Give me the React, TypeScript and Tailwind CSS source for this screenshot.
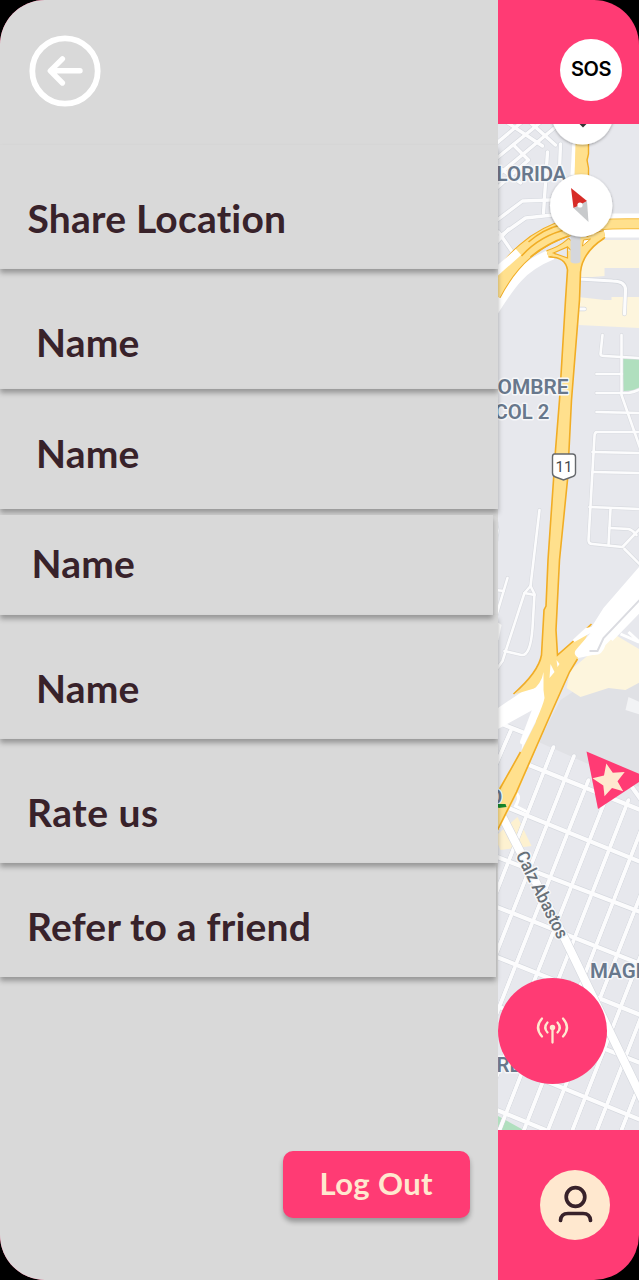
import React from "react";

type Row = { label: string; box: string; text: string };

const rows: Row[] = [
  { label: "Share Location", box: "h-[124px] w-full pt-[49px] pl-[27.5px]", text: "tracking-[0.2px]" },
  { label: "Name", box: "h-[120px] w-full pt-[49px] pl-[36px]", text: "tracking-[0.2px]" },
  { label: "Name", box: "h-[120px] w-full pt-[40px] pl-[36px]", text: "tracking-[0.2px]" },
  { label: "Name", box: "mt-[5.5px] h-[100px] w-[493px] bg-[#d9d9d9] pt-[24.5px] pl-[31.5px]", text: "tracking-[0.2px]" },
  { label: "Name", box: "h-[124.5px] w-full pt-[49.5px] pl-[36px]", text: "tracking-[0.2px]" },
  { label: "Rate us", box: "h-[124px] w-full pt-[49px] pl-[27px]", text: "tracking-[0.5px]" },
  { label: "Refer to a friend", box: "h-[114px] w-[496px] pt-[39px] pl-[27px]", text: "tracking-[0.2px]" },
];

const across = [
  "M526 764L645 812", "M503 806L645 864", "M494 856L645 914", "M494 906L645 966",
  "M494 956L645 1017", "M494 1005L645 1065", "M494 1060L645 1122", "M494 1109L545 1130",
  "M494 721L524 733", "M630 785L650 813",
];
const down = [
  "M511 729L494 768", "M532 740L474 887", "M553 747L494 897", "M573.5 756L494 958", "M588 780L470 1080",
  "M608 792L475 1130", "M628 800L499 1130", "M650 806L523.5 1130",
  "M654 860L547.5 1130", "M655 918L572 1130", "M655 980L596.5 1130", "M655 1043L621 1130", "M655 1104L645 1130",
];
const suburb = [
  "M602 335L600 354Q600 356 604 356L639 358", "M621 335L621 395L642 455", "M596 374L621 374",
  "M596 393L628 393Q634 392 640 389", "M596 412L640 413", "M642 432L596 432Q594 433 594 436L588 540Q588 544 592 544L622 547L640 528",
  "M592 452L640 453", "M592 472L640 473", "M589 507L640 509", "M610 509L608 545",
  "M609 528L628 529Q632 530 636 535", "M624 549L642 567",
  "M539 510L530 586L524 593L502 661L494 672", "M530 586L534 594L532 628Q530 656 521 655L504 651", "M524 593L534 595",
  "M507 578L496 615", "M495 590L503 591",
];

function Roads({ list, width, edge = "#d5d8de" }: { list: string[]; width: number; edge?: string }) {
  return (
    <g fill="none" strokeLinecap="round" strokeLinejoin="round">
      {list.map((d) => <path key={`e${d}`} d={d} stroke={edge} strokeWidth={width + 1.2} />)}
      {list.map((d) => <path key={d} d={d} stroke="#fcfcfd" strokeWidth={width} />)}
    </g>
  );
}

function CityMap() {
  return (
    <svg className="block h-[1005.5px] w-full shrink-0" viewBox="497.5 124 141.5 1005.5" preserveAspectRatio="none">
      <defs>
        <filter id="lift" x="-20%" y="-20%" width="140%" height="140%">
          <feDropShadow dx="0" dy="1" stdDeviation="1.5" floodOpacity="0.35" />
        </filter>
      </defs>
      <rect x="490" y="120" width="160" height="1015" fill="#e7e8ed" />
      <path d="M560 700L590 680L645 660V790L590 765L538 742Z" fill="#e0e1e5" />
      <path d="M596 240H640V328L578 325V297L604 298V268H580L584 245Z" fill="#fdf5dd" />
      <path d="M580 268H640V297H611V300H604L578 297Z" fill="#e4e5ea" />
      <path d="M584 245H604V276L580 278Z" fill="#fdf5dd" />
      <path d="M622 358H640V390L623 391Z" fill="#b0dfbe" />
      <path d="M570 670L600 645L615 635L640 650V682L625 690L608 688L580 697L566 688Z" fill="#fdf5dd" />
      <path d="M628 697L641 703V715L625 710Z" fill="#f2f3f5" />
      <path d="M494 837L517 817L531 846L500 850Z" fill="#fdf1d0" />
      <path d="M494 1114L523 1130H494Z" fill="#b0dfbe" />

      <Roads
        list={["M494 145L513 129L530 115", "M494 160L532 129L545 118", "M494 178L549 132L561 122", "M500 118L542 146", "M518 112L555 145", "M494 164L520 183", "M513 145L528 160L494 190", "M547 152L543 213", "M560 144L559 170", "M494 222L522 201L550 200", "M494 240L525 218L552 215", "M498 232L516 258", "M494 245L508 229"]}
        width={3.4}
      />
      <path d="M574 140L572 175" stroke="#fff" strokeWidth="4" />
      <Roads list={suburb} width={2.6} edge="#d9dbe0" />
      <Roads list={["M578 279L612 281Q625 281 625 290L624 314", "M577 309H584"]} width={3.2} />
      <Roads list={down} width={3.5} />
      <Roads list={across} width={4.2} />
      <g stroke="#fcfcfd" strokeWidth="3.4">
        {down.map((d) => <path key={d} d={d} />)}
      </g>

      <g fill="none" strokeLinecap="round">
        <path d="M501 815L565 940L650 1116" stroke="#d5d8de" strokeWidth="9.4" />
        <path d="M501 815L565 940L650 1116" stroke="#fff" strokeWidth="8.2" />
        <path d="M514 792Q520 795 517 802L515 806L525 811" stroke="#fff" strokeWidth="3" />
        <path d="M490 722L545 685" stroke="#fff" strokeWidth="15" />
        <path d="M542 689L522 742" stroke="#fff" strokeWidth="5" />
      </g>
      <path d="M494 515Q503 528 494 552Z" fill="#fff" stroke="#d8dbe0" />
      <path d="M494 620L501 625L498 640H494Z" fill="#fff" />

      <g fill="none">
        <path d="M603 225.500H642" stroke="#fff" strokeWidth="24" />
        <path d="M596 225Q620 223 642 224" stroke="#f6bd3f" strokeWidth="11" />
        <path d="M596 225Q620 223 642 224" stroke="#ffe08d" strokeWidth="9" />
        <path d="M490 315C510 283 520 267 552 254" stroke="#fff" strokeWidth="11" />
        <path d="M492 294C510 259 535 237 572 226" stroke="#f1ad25" strokeWidth="18" />
        <path d="M492 294C510 259 535 237 572 226" stroke="#ffe08d" strokeWidth="16" />
        <path d="M492 275L518 252" stroke="#fff" strokeWidth="8" />
        <path d="M521 256Q540 235 568 229M530 257Q545 244 568 236M528 242Q543 229 560 225" stroke="#f1ad25" strokeWidth="1.6" />
        <path d="M547 254Q560 250 568 243L580 255L586 241Q594 236 604 234" stroke="#f1ad25" strokeWidth="8" />
        <path d="M547 254Q560 250 568 243L580 255L586 241Q594 236 604 234" stroke="#ffe08d" strokeWidth="6" />
      </g>
      <path d="M575 141H588V157L587 165L588 180H574Z" fill="#ffe08d" />
      <path d="M588 141V154L586.5 160L588 168V180" fill="none" stroke="#f1ad25" strokeWidth="1.4" />
      <path d="M549 256Q565 257 567 270L565 300L559 400L555 450L553 480L547.5 560L545.5 606L543.5 610L541 655Q540 670 515 694L542 686L535 723L520 753L497 790V832L516 795L552 710L569 672L577 659L591 624L557 655L555.5 630L559 560L567 480L571 400L579 300L580 272Q582 252 604 237H572V250Z" fill="#ffe08d" />
      <path d="M549 257Q565 257 567 270L565 300L559 400L555 450L553 480L547.5 560L545.5 606L543.5 610L541 655Q538 672 513 694M520 752L497 793M497 830L516 792L552 710L569 672L577 659M591 624L573 641L557 655L555.5 630L559 560L567 480L571 400L579 300L580 272Q582 252 604 238" fill="none" stroke="#f1ad25" strokeWidth="1.6" />
      <path d="M553 253L567 247V258Z" fill="#e7e8ed" stroke="#f1ad25" strokeWidth="1.2" />
      <path d="M583 240L590 239L582 246Z" fill="#fff" stroke="#f1ad25" />
      <path d="M570 228H580V262Q575 265 570 262Z" fill="#d5d7dc" />
      <path d="M494 710L531 691Q541 684 543 672V690L544 698Q543 704 535 722L521 750L523 735L532 710L494 731Z" fill="#fff" />
      <path d="M550 664L554 672L549 678ZM556 660L559 664L557 667Z" fill="#fff" />
      <path d="M572 640L585 628L591 627L603 608L641 564V608L622 628L605 645Q602 656 592 655L578 658Q571 654 577 648L590 633L574 642Z" fill="#fff" />
      <path d="M589 651L597 651L603 638L641 598" fill="none" stroke="#dbdce1" strokeWidth="2" />
      <path d="M611 640L640 610M620 634L638 642M628 632L642 645" stroke="#fff" strokeWidth="3" />

      <g fontFamily="Roboto, sans-serif" fill="#68788c" stroke="#f6f7f9" strokeWidth="3" paintOrder="stroke" strokeLinejoin="round">
        <text x="496" y="181" fontSize="20.5" fontWeight="600" textLength="70" lengthAdjust="spacingAndGlyphs">LORIDA</text>
        <text x="497" y="394" fontSize="20.5" fontWeight="600" textLength="71" lengthAdjust="spacingAndGlyphs">OMBRE</text>
        <text x="494" y="419" fontSize="20.5" fontWeight="600" textLength="55" lengthAdjust="spacingAndGlyphs">COL 2</text>
        <text x="589.5" y="978" fontSize="20.5" fontWeight="600">MAGI</text>
        <text x="496" y="1072" fontSize="20.5" fontWeight="600">RE</text>
        <text x="488" y="804" fontSize="20" fontWeight="600">O</text>
        <text transform="translate(515 855) rotate(63.500)" fontSize="18" fontWeight="500" fill="#687078" textLength="95" lengthAdjust="spacingAndGlyphs">Calz Abastos</text>
      </g>
      <path d="M496 804L505 804L506 807L498 808Z" fill="#16862c" />

      <path d="M554 454H572Q575 454 575 457V473Q575 476 571 477L563 480L555 477Q552 476 552 473V457Q552 454 554 454Z" fill="#fff" stroke="#65686c" strokeWidth="1.4" />
      <text x="563.5" y="472" textAnchor="middle" fontFamily="Roboto, sans-serif" fontSize="15" fill="#44474b">11</text>

      <circle cx="582" cy="113.5" r="31" fill="#fff" filter="url(#lift)" />
      <path d="M579 124H586L582.5 127.5Z" fill="#333" />
      <circle cx="580.7" cy="205.5" r="31.2" fill="#fff" filter="url(#lift)" />
      <path d="M570.5 188L586.5 201L580 206L573 208Z" fill="#d72c27" />
      <path d="M573 208L586.5 201L588 222Z" fill="#c8cacc" />
      <circle cx="579.5" cy="205" r="2.6" fill="#fff" />

      <path d="M586 751.5L646 777L597.5 809Z" fill="#ff3b74" />
      <path d="M605.8 763.500L612.3 772.800L624.200 772L617 781.200L622.7 791.3L611.5 788L604 796.300L602.800 785.500L592 778.200L603.500 775.5Z" fill="#ffe8cf" />
      <ellipse cx="552" cy="1031" rx="54.500" ry="53" fill="#ff3b74" />
      <g fill="none" stroke="#ffe8cf" strokeWidth="2.300" strokeLinecap="round">
        <circle cx="552" cy="1027.5" r="1.6" fill="#ffe8cf" />
        <path d="M552 1029V1042.5M541.500 1018.5Q533.500 1027.5 541.500 1036.5M547 1022.5Q542.5 1027.5 547 1032.5M557 1022.5Q561.5 1027.5 557 1032.5M562.500 1018.5Q570.500 1027.5 562.500 1036.5" />
      </g>
    </svg>
  );
}

export default function App() {
  return (
    <div className="h-[1280px] w-[639px] overflow-hidden bg-black font-['Lato',sans-serif]">
      <div className="flex h-full w-full overflow-hidden rounded-[45px] bg-[#ff3b74]">
        <aside className="relative z-10 flex w-[497.5px] shrink-0 flex-col bg-[#d9d9d9]">
          <header className="h-[145px] pt-[35px] pl-[28.5px]">
            <button aria-label="Back" className="block">
              <svg className="size-[72px]" viewBox="0 0 72 72" fill="none" stroke="#fff" strokeLinecap="round" strokeLinejoin="round">
                <circle cx="36" cy="36" r="32.7" strokeWidth="5.8" />
                <path d="M51 35.8H22M33.4 23.800L21.3 35.8L33.4 48" strokeWidth="5.400" />
              </svg>
            </button>
          </header>
          <nav className="flex flex-col">
            {rows.map((row, i) => (
              <div key={i} className={`shadow-[0_4px_5px_rgba(0,0,0,0.3)] ${row.box}`}>
                <span className={`block text-[39px] leading-[48px] font-bold whitespace-nowrap text-[#38222a] ${row.text}`}>{row.label}</span>
              </div>
            ))}
          </nav>
          <div className="mt-auto flex justify-end pr-[28px] pb-[62px]">
            <button className="flex h-[67px] w-[186.5px] items-center justify-center rounded-[10px] bg-[#ff3b74] pb-[2px] text-[31px] font-bold tracking-[0.4px] text-[#ffe8cf] shadow-[0_4px_5px_rgba(0,0,0,0.3)]">
              Log Out
            </button>
          </div>
        </aside>
        <main className="flex min-w-0 flex-1 flex-col">
          <header className="flex h-[124px] shrink-0 items-start justify-end pt-[39px] pr-[17px]">
            <button className="flex size-[62px] items-center justify-center rounded-full bg-white pb-[2px] font-['Inter',sans-serif] text-[20px] font-semibold tracking-[-0.4px] text-black">SOS</button>
          </header>
          <CityMap />
          <footer className="flex flex-1 items-start pt-[40px] pl-[42px]">
            <button aria-label="Profile" className="flex size-[70px] items-center justify-center rounded-full bg-[#ffe8cf]">
              <svg className="size-[70px]" viewBox="0 0 70 70" fill="none" stroke="#38222a" strokeWidth="3.7" strokeLinecap="round">
                <circle cx="35.5" cy="27" r="9.3" />
                <path d="M20.5 50.5Q21 43.5 28 43.5H43Q50 43.5 50.5 50.5" />
              </svg>
            </button>
          </footer>
        </main>
      </div>
    </div>
  );
}
